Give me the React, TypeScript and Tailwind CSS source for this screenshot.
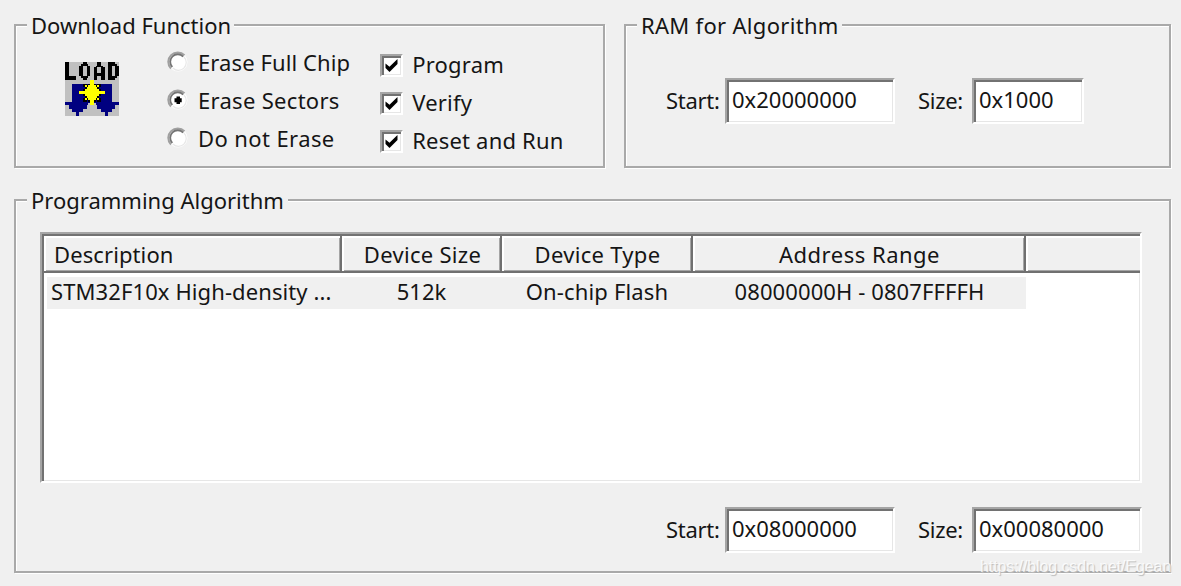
import type { ReactNode } from "react";

const sunken =
  "border-2 border-t-[#a5a5a5] border-l-[#a5a5a5] border-r-white border-b-white bg-white shadow-[inset_2px_2px_0_#727272,inset_-1px_-1px_0_#e6e6e6]";

function Group({ title, legend, className, children }: { title: string; legend: string; className: string; children: ReactNode }) {
  return (
    <section
      className={`flex flex-col border-2 border-[#a9a9a9] shadow-[1px_1px_0_#fff,inset_1px_1px_0_#fff] ${className}`}
    >
      <h2 className={`-mt-[17px] mb-px ml-[11px] h-8 shrink-0 self-start whitespace-nowrap bg-[#f0f0f0] pl-1 leading-8 ${legend}`}>
        {title}
      </h2>
      {children}
    </section>
  );
}

function Radio({ label, checked, text }: { label: string; checked?: boolean; text: string }) {
  return (
    <label className="flex h-[38px] items-center">
      <svg width="22" height="22" viewBox="0 0 22 22" className="-mt-[2px] shrink-0">
        <circle cx="11" cy="11" r="9.5" fill="#fff" />
        <path d="M4 17.5A9.2 9.2 0 0 1 17.5 4.2" fill="none" stroke="#a0a0a0" strokeWidth="2" />
        <path d="M5.3 16A7.4 7.4 0 0 1 16.2 5.6" fill="none" stroke="#747474" strokeWidth="1.8" />
        <path d="M17 6A7.7 7.7 0 0 1 5.8 17" fill="none" stroke="#e8e8e8" strokeWidth="1.2" />
        {checked && <path d="M9.500 7.500h3.500v1.700h1.700v4H13V15H9.500v-1.800H7.500v-4h2z" fill="#000" />}
      </svg>
      <span className={`-mt-[3px] ml-[9px] whitespace-nowrap ${text}`}>{label}</span>
    </label>
  );
}

function Check({ label }: { label: string }) {
  return (
    <label className="flex h-[38px] items-center">
      <span className={`flex size-[23px] shrink-0 items-center justify-center ${sunken}`}>
        <svg width="15" height="15" viewBox="0 0 15 15">
          <path d="M1.500 5.500l4 3.300L13.500 1v5L5.500 14l-4-4z" fill="#000" />
        </svg>
      </span>
      <span className="-mt-[3px] ml-[9px] whitespace-nowrap tracking-[0.2px]">{label}</span>
    </label>
  );
}

function Field({ label, value, box, text }: { label: string; value: string; box: string; text: string }) {
  return (
    <label className="flex items-center">
      <span className={`-mt-[2px] whitespace-nowrap tracking-[-0.3px] ${text}`}>{label}</span>
      <span className={`flex h-[46px] items-center whitespace-nowrap pb-[5px] pl-[5px] ${sunken} ${box}`}>{value}</span>
    </label>
  );
}

const loadBitmap = [
  "KK........KK......KK....KKKK..",
  "KK.......KKKK.....KK....KKKKK.",
  "KK......KK..KK...KKKK...KK..KK",
  "KK......KK..KK..KK..KK..KK..KK",
  "KK......KK..KK..KK..KK..KK..KK",
  "KK......KK..KK..KK..KK..KK..KK",
  "KK......KK..KK..KKKKKK..KK..KK",
  "KK......KK..KK..KKKKKK..KK..KK",
  "KKKKKK...KKKK...KK..KK..KKKKK.",
  "KKKKKK....KK....KK..KK..KKKK..",
  "..............YY..............",
  "..............YY..............",
  "....BBBBBBKKBKYYKBKKBBBBBB....",
  "....BBBBBBKYKYYYYKYKBBBBBB....",
  "....BBBBBBBKYYYYYYKBBBBBBB....",
  "....BBBBBBKYYYYYYYYKBBBBBB....",
  "....BBBBYYYYYYYYYYYYYYBBBB....",
  "....BBBBYYYYYYYYYYYYYYBBBB....",
  "....BBBBBBKYYYYYYYYKBBBBBB....",
  "....BBBBBBBKYYYYYYKBBBBBBB....",
  "....BBBBBBKYKYYYYKYKBBBBBB....",
  "....BBBBBBKKBKYYKBKKBBBBBB....",
  "BBBBBBBBBBBBBBYYBBBBBBBBBBBBBB",
  "BBBBBBBBBBBBB.YY.BBBBBBBBBBBBB",
  "..BBBBBBBBBB......BBBBBBBBBB..",
  "..BBBBBBBBBB......BBBBBBBBBB..",
  "....BBBBBB..........BBBBBB....",
  "....BBBBBB..........BBBBBB....",
  "......BB..............BB......",
  "......BB..............BB......",
];

const inks: Record<string, string> = { K: "#000", B: "#000080", Y: "#ff0" };

function LoadIcon() {
  return (
    <svg width="54" height="54" viewBox="0 0 30 30" shapeRendering="crispEdges">
      <rect width="30" height="30" fill="#c0c0c0" />
      {Object.keys(inks).map((ink) => (
        <path
          key={ink}
          fill={inks[ink]}
          d={loadBitmap
            .map((row, y) => [...row].map((p, x) => (p === ink ? `M${x} ${y}h1v1h-1z` : "")).join(""))
            .join("")}
        />
      ))}
    </svg>
  );
}

const columns = [
  { head: "Description", value: "STM32F10x High-density ...", width: "w-[298px]", headText: "pl-[10px] tracking-[0.1px]", cell: "w-[295px] pl-1 tracking-[0.1px]" },
  { head: "Device Size", value: "512k", width: "w-[160px]", headText: "pl-[3px] text-center tracking-[0.3px]", cell: "w-[160px] pr-px text-center" },
  { head: "Device Type", value: "On-chip Flash", width: "w-[191px]", headText: "pl-[2px] text-center tracking-[0.3px]", cell: "w-[191px] pr-px text-center tracking-[0.15px]" },
  { head: "Address Range", value: "08000000H - 0807FFFFH", width: "w-[333px]", headText: "pl-[2px] text-center tracking-[0.5px]", cell: "w-[333px] text-center tracking-[0.1px]" },
];

export default function App() {
  return (
    <main className="relative flex h-[586px] w-[1181px] flex-col overflow-hidden bg-[#f0f0f0] pl-[14px] pt-6 font-['Noto_Sans',sans-serif] text-[22px] leading-[38px] text-[#151515]">
      <div className="flex gap-[19px]">
        <Group title="Download Function" legend="w-[207px]" className="h-[144px] w-[591px]">
          <div className="flex">
            <div className="ml-[49px] mt-[20px]">
              <LoadIcon />
            </div>
            <div className="ml-[48px] mt-[2px]">
              <Radio label="Erase Full Chip" text="tracking-[0.1px]" />
              <Radio label="Erase Sectors" checked text="tracking-[0.3px]" />
              <Radio label="Do not Erase" text="tracking-[0.4px]" />
            </div>
            <div className="ml-[30px] mt-[4px]">
              <Check label="Program" />
              <Check label="Verify" />
              <Check label="Reset and Run" />
            </div>
          </div>
        </Group>
        <Group title="RAM for Algorithm" legend="w-[205px] tracking-[0.3px]" className="h-[144px] w-[547px]">
          <div className="ml-10 mt-[36px] flex">
            <Field label="Start:" value="0x20000000" box="w-[170px]" text="w-[59px]" />
            <Field label="Size:" value="0x1000" box="w-[112px]" text="ml-[23px] w-[54px]" />
          </div>
        </Group>
      </div>
      <Group title="Programming Algorithm" legend="w-[261px]" className="mt-[31px] h-[374px] w-[1157px]">
        <div className={`ml-6 mt-[15px] h-[251px] w-[1102px] shrink-0 pl-[2px] pt-[2px] ${sunken}`}>
          <div className="flex h-[37px] w-[1096px] bg-[#f0f0f0] leading-[36px]">
            {columns.map((c) => (
              <div
                key={c.head}
                className={`h-[37px] shrink-0 whitespace-nowrap border-b-2 border-r-2 border-[#707070] shadow-[inset_2px_2px_0_#fff,inset_-1px_-1px_0_#a5a5a5] ${c.width} ${c.headText}`}
              >
                {c.head}
              </div>
            ))}
            <div className="h-[37px] grow border-b-2 border-[#707070] shadow-[inset_2px_2px_0_#fff,inset_0_-1px_0_#a5a5a5]" />
          </div>
          <div className="ml-[3px] mt-1 flex h-8 w-[979px] bg-[#f0f0f0] leading-[28px]">
            {columns.map((c) => (
              <div key={c.value} className={`shrink-0 whitespace-nowrap ${c.cell}`}>
                {c.value}
              </div>
            ))}
          </div>
        </div>
        <div className="ml-[650px] mt-[24px] flex">
          <Field label="Start:" value="0x08000000" box="w-[170px]" text="w-[59px]" />
          <Field label="Size:" value="0x00080000" box="w-[170px]" text="ml-[23px] w-[54px]" />
        </div>
      </Group>
      <div className="absolute left-[980px] top-[557px] whitespace-nowrap font-['Liberation_Sans',sans-serif] text-[16px] leading-5 tracking-[-0.1px] text-white/80 [text-shadow:1px_1px_1px_#bbb]">
        https://blog.csdn.net/Egean
      </div>
    </main>
  );
}
